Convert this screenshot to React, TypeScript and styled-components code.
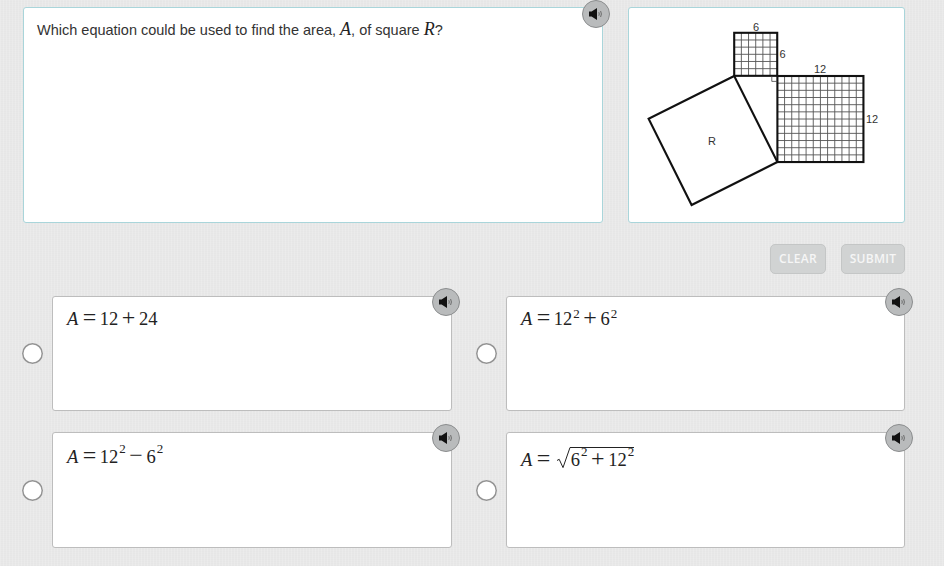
import React from "react";
import styled, { createGlobalStyle } from "styled-components";

const GlobalStyle = createGlobalStyle`
	html, body {
		margin: 0;
		padding: 0;
		height: 100%;
	}
	body {
		background-color: #e8e8e8;
		background-image: repeating-linear-gradient(90deg, rgba(255,255,255,0.16) 0 1px, transparent 1px 3px),
			repeating-linear-gradient(0deg, rgba(0,0,0,0.008) 0 1px, transparent 1px 2px);
		font-family: "Liberation Sans", Arial, sans-serif;
		overflow: hidden;
	}
`;

const AudioIcon = () => (
	<svg width="18" height="16" viewBox="0 0 18 16">
		<path d="M2 5.4h2.6L10 2v12L4.6 10.6H2z" fill="#111" />
		<path d="M11.8 6.2q1 1.8 0 3.6M13.6 5q1.6 3 0 6" fill="none" stroke="#555" strokeWidth="0.8" />
	</svg>
);

const PythagorasFigure = () => {
	const cell = 7.17;
	const small = { x: 105.2, y: 24.8, n: 6 };
	const big = { x: 148.4, y: 68, n: 12 };
	const lines = (s: { x: number; y: number; n: number }) =>
		Array.from({ length: s.n - 1 }, (_, i) => {
			const d = (i + 1) * cell;
			return (
				<React.Fragment key={i}>
					<line x1={s.x + d} y1={s.y} x2={s.x + d} y2={s.y + s.n * cell} />
					<line x1={s.x} y1={s.y + d} x2={s.x + s.n * cell} y2={s.y + d} />
				</React.Fragment>
			);
		});
	return (
		<svg width="275" height="214" viewBox="0 0 275 214">
			<g stroke="#555" strokeWidth="0.9">
				{lines(small)}
				{lines(big)}
			</g>
			<g fill="none" stroke="#111" strokeWidth="2.1">
				<rect x={small.x} y={small.y} width={6 * cell} height={6 * cell} />
				<rect x={big.x} y={big.y} width={12 * cell} height={12 * cell} />
				<path d="M105.2 68 L148.4 154 L62.6 197 L19.6 110.8 Z" strokeLinejoin="miter" />
			</g>
			<path d="M142.8 68v5.4h5.6" fill="none" stroke="#444" strokeWidth="0.8" />
			<FigureLabel x="127" y="23" textAnchor="middle">6</FigureLabel>
			<FigureLabel x="153.5" y="50" textAnchor="middle">6</FigureLabel>
			<FigureLabel x="191" y="65" textAnchor="middle">12</FigureLabel>
			<FigureLabel x="243" y="115" textAnchor="middle">12</FigureLabel>
			<FigureLabel x="83" y="137" textAnchor="middle">R</FigureLabel>
		</svg>
	);
};

const Radical = ({ children }: { children: React.ReactNode }) => (
	<RadicalWrap>
		<svg width="15" height="22" viewBox="0 0 15 22">
			<path d="M1 13.5l2.2-1.2L7 20.6 14 .5h1" fill="none" stroke="#222" strokeWidth="1" />
		</svg>
		<RadicalBody>{children}</RadicalBody>
	</RadicalWrap>
);

const App = () => (
	<Page>
		<GlobalStyle />
		<TopRow>
			<QuestionCard>
				<QuestionText>
					Which equation could be used to find the area, <InlineVar>A</InlineVar>, of square <InlineVar>R</InlineVar>?
				</QuestionText>
				<AudioButton $top={-8} $right={-8}><AudioIcon /></AudioButton>
			</QuestionCard>
			<FigureCard>
				<PythagorasFigure />
			</FigureCard>
		</TopRow>
		<Actions>
			<ActionButton $width={56}>CLEAR</ActionButton>
			<ActionButton $width={64}>SUBMIT</ActionButton>
		</Actions>
		<OptionGrid>
			<OptionRow>
				<RadioMark />
				<OptionCard>
					<MathLine $drop={1}><Var>A</Var><Op>=</Op>12<Op>+</Op>24</MathLine>
					<AudioButton $top={-9} $right={-9}><AudioIcon /></AudioButton>
				</OptionCard>
			</OptionRow>
			<OptionRow>
				<RadioMark />
				<OptionCard>
					<MathLine $drop={1}><Var>A</Var><Op>=</Op>12<Sup $raise={1}>2</Sup><Op>+</Op>6<Sup $raise={1}>2</Sup></MathLine>
					<AudioButton $top={-9} $right={-9}><AudioIcon /></AudioButton>
				</OptionCard>
			</OptionRow>
			<OptionRow>
				<RadioMark />
				<OptionCard>
					<MathLine $drop={3}><Var>A</Var><Op>=</Op>12<Sup $raise={4}>2</Sup><Op>−</Op>6<Sup $raise={4}>2</Sup></MathLine>
					<AudioButton $top={-9} $right={-9}><AudioIcon /></AudioButton>
				</OptionCard>
			</OptionRow>
			<OptionRow>
				<RadioMark />
				<OptionCard>
					<MathLine $drop={6}>
						<Var>A</Var>
						<Op>=</Op>
						<Radical>6<Sup $raise={4}>2</Sup><Op>+</Op>12<Sup $raise={4}>2</Sup></Radical>
					</MathLine>
					<AudioButton $top={-9} $right={-9}><AudioIcon /></AudioButton>
				</OptionCard>
			</OptionRow>
		</OptionGrid>
	</Page>
);

const Page = styled.div`
	width: 944px;
	height: 566px;
	box-sizing: border-box;
	padding: 7px 39px 0 22px;
`;

const TopRow = styled.div`
	display: flex;
	justify-content: space-between;
	padding-left: 1px;
`;

const QuestionCard = styled.div`
	position: relative;
	width: 580px;
	height: 216px;
	box-sizing: border-box;
	background: #fff;
	border: 1px solid #a9d5da;
	border-radius: 3px;
	padding: 12px 13px;
`;

const QuestionText = styled.p`
	margin: 0;
	font-size: 14.5px;
	line-height: 19px;
	color: #333;
`;

const InlineVar = styled.i`
	font-family: "Liberation Serif", "Times New Roman", serif;
	font-size: 18px;
	line-height: 19px;
	color: #222;
`;

const FigureCard = styled.div`
	width: 277px;
	height: 216px;
	box-sizing: border-box;
	background: #fff;
	border: 1px solid #a9d5da;
	border-radius: 3px;

	svg {
		display: block;
	}
`;

const FigureLabel = styled.text`
	font-family: "Liberation Sans", Arial, sans-serif;
	font-size: 11px;
	fill: #333;
`;

const Actions = styled.div`
	display: flex;
	justify-content: flex-end;
	gap: 15px;
	margin-top: 21px;
`;

const ActionButton = styled.div<{ $width: number }>`
	width: ${(p) => p.$width}px;
	height: 30px;
	box-sizing: border-box;
	display: flex;
	align-items: center;
	justify-content: center;
	padding-bottom: 2px;
	background: #d1d3d3;
	border: 1px solid #c4c6c6;
	border-radius: 5px;
	color: #f6f6f6;
	font-family: "Open Sans", sans-serif;
	font-size: 12px;
	font-weight: 600;
	letter-spacing: 0.3px;
`;

const OptionGrid = styled.div`
	display: grid;
	grid-template-columns: 430px 429px;
	grid-template-rows: 115px 116px;
	column-gap: 24px;
	row-gap: 21px;
	margin-top: 22px;
`;

const OptionRow = styled.div`
	display: flex;
	align-items: center;
	gap: 9px;
`;

const RadioMark = styled.span`
	flex: none;
	width: 21px;
	height: 21px;
	box-sizing: border-box;
	background: #fff;
	box-shadow: inset 0 0 0 1.5px #939393;
	border-radius: 50%;
`;

const OptionCard = styled.div`
	position: relative;
	flex: 1;
	height: 100%;
	box-sizing: border-box;
	background: #fff;
	border: 1px solid #bdbdbd;
	border-radius: 3px;
	padding: 11px 14px;
`;

const MathLine = styled.div<{ $drop: number }>`
	display: flex;
	align-items: flex-start;
	margin-top: ${(p) => p.$drop}px;
	font-family: "Liberation Serif", "Times New Roman", serif;
	font-size: 18.5px;
	line-height: 20px;
	color: #222;
`;

const Var = styled.i`
	margin-right: 1px;
`;

const Op = styled.span`
	margin: -2px 3.5px 0;
	font-size: 24px;
	font-weight: 300;
`;

const Sup = styled.span<{ $raise: number }>`
	font-size: 13px;
	line-height: 12px;
	margin-top: ${(p) => -p.$raise}px;
	margin-left: 1px;
`;

const RadicalWrap = styled.span`
	display: flex;
	align-items: flex-start;
	margin: -3px 0 0 2px;

	svg {
		flex: none;
		display: block;
	}
`;

const RadicalBody = styled.span`
	display: flex;
	align-items: flex-start;
	padding-top: 2px;
	border-top: 1px solid #222;
`;

const AudioButton = styled.div<{ $top: number; $right: number }>`
	position: absolute;
	top: ${(p) => p.$top}px;
	right: ${(p) => p.$right}px;
	width: 28px;
	height: 28px;
	box-sizing: border-box;
	display: flex;
	align-items: center;
	justify-content: center;
	background: #b9bbbc;
	border: 1px solid #8b8d8e;
	border-radius: 50%;
`;

export default App;
